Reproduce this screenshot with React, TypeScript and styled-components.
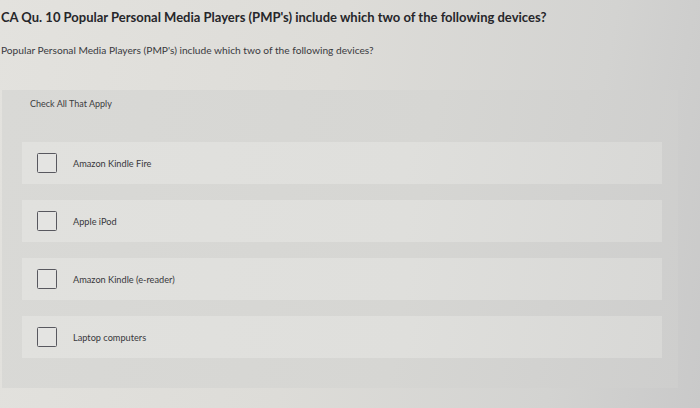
import styled, {createGlobalStyle} from "styled-components";

const GlobalStyle = createGlobalStyle`
  html, body {
    margin: 0;
    padding: 0;
  }

  body {
    width: 700px;
    height: 408px;
    overflow: hidden;
    background: linear-gradient(100deg, #e3e2de 0%, #dddcd8 45%, #d3d3d1 80%, #c9c9c9 100%);
    font-family: Lato, "Open Sans", sans-serif;
    color: #2a2a2e;
  }
`;

const options = [
    'Amazon Kindle Fire',
    'Apple iPod',
    'Amazon Kindle (e-reader)',
    'Laptop computers',
];

export default function App() {
    return (
        <>
            <GlobalStyle/>
            <Page>
                <Title>CA Qu. 10 Popular Personal Media Players (PMP's) include which two of the following devices?</Title>
                <Prompt>Popular Personal Media Players (PMP's) include which two of the following devices?</Prompt>
                <Panel>
                    <Instruction>Check All That Apply</Instruction>
                    <OptionList>
                        {options.map((label) => (
                            <OptionRow key={label}>
                                <Checkbox/>
                                <OptionLabel>{label}</OptionLabel>
                            </OptionRow>
                        ))}
                    </OptionList>
                </Panel>
            </Page>
        </>
    );
}

const Page = styled.div`
  display: flex;
  flex-direction: column;
  padding: 9px 0 0 0;
`;

const Title = styled.h1`
  margin: 0;
  padding-left: 1px;
  font-size: 13px;
  font-weight: 700;
  line-height: 16px;
  color: #26262a;
`;

const Prompt = styled.p`
  margin: 19px 0 0 0;
  padding-left: 1px;
  font-size: 10.2px;
  line-height: 13px;
  color: #3a3a3e;
`;

const Panel = styled.section`
  margin: 33px 0 0 2px;
  width: 676px;
  height: 298px;
  box-sizing: border-box;
  padding: 8px 16px 0 20px;
  background: linear-gradient(100deg, #d9d9d6 0%, #d6d6d3 60%, #cececd 100%);
`;

const Instruction = styled.div`
  padding-left: 8px;
  font-size: 9px;
  line-height: 12px;
  color: #3c3c40;
`;

const OptionList = styled.div`
  display: flex;
  flex-direction: column;
  gap: 16px;
  margin-top: 32px;
`;

const OptionRow = styled.label`
  display: flex;
  align-items: center;
  gap: 16px;
  height: 42px;
  padding-left: 15px;
  background: linear-gradient(100deg, #e1e1de 0%, #dfdfdc 60%, #d8d8d6 100%);
`;

const Checkbox = styled.span`
  width: 18px;
  height: 18px;
  border: 1.5px solid #58585f;
  border-radius: 1.5px;
  background: #e4e4e2;
`;

const OptionLabel = styled.span`
  font-size: 9.2px;
  line-height: 11px;
  color: #38383c;
`;
